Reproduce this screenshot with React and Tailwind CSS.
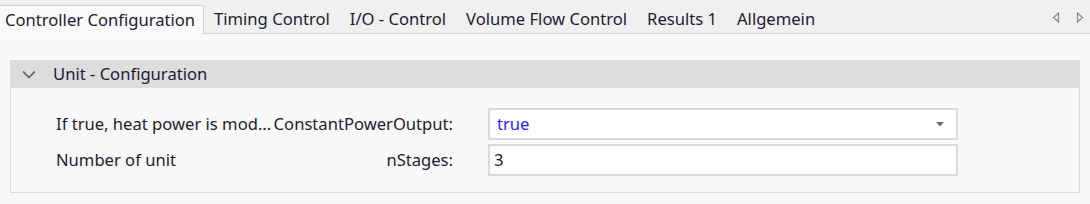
import React from "react";

const font = { fontFamily: '"Noto Sans", "Open Sans", sans-serif' };

function Tab({ label, active }) {
  if (active) {
    return (
      <div className="h-[29px] mt-[5px] pl-[5px] pr-[8px] flex items-center bg-[#fafafa] border border-b-0 border-l-0 border-[#d4d4d4] -mb-px relative z-10 text-[#1e1b33]">
        {label}
      </div>
    );
  }
  return (
    <div className="h-[29px] mt-[5px] px-[10px] flex items-center text-[#1e1b33]">{label}</div>
  );
}

export default function App() {
  return (
    <div className="w-[1090px] h-[204px] bg-[#f9f9f9] text-[16.6px] overflow-hidden" style={font}>
      <div className="h-[34px] bg-[#f0f0f0] border-b border-[#d4d4d4] flex items-start">
        <Tab label="Controller Configuration" active />
        <Tab label="Timing Control" />
        <Tab label="I/O - Control" />
        <Tab label="Volume Flow Control" />
        <Tab label="Results 1" />
        <Tab label="Allgemein" />
        <div className="ml-auto flex items-center gap-[16px] h-[34px] pr-[6px]">
          <svg width="8" height="11" viewBox="0 0 8 11">
            <path d="M6.5 1 L1.5 5.5 L6.5 10 Z" fill="none" stroke="#8a8a8a" strokeWidth="1.2" />
          </svg>
          <svg width="8" height="11" viewBox="0 0 8 11">
            <path d="M1.5 1 L6.5 5.5 L1.5 10 Z" fill="none" stroke="#8a8a8a" strokeWidth="1.2" />
          </svg>
        </div>
      </div>
      <div className="pt-[26px] pl-[10px] pr-[10px]">
        <div className="w-[1070px] border border-[#dcdcdc]">
          <div className="h-[27px] bg-[#dddddd] flex items-center text-[#1e1b33]">
            <svg width="14" height="9" viewBox="0 0 14 9" className="ml-[11px] mr-[17px]">
              <path d="M1 1.5 L7 7.5 L13 1.5" fill="none" stroke="#6e6e6e" strokeWidth="1.8" />
            </svg>
            Unit - Configuration
          </div>
          <div className="pt-[20px] pb-[16px] flex flex-col gap-[4px]">
            <div className="flex items-center">
              <div className="ml-[45px] w-[397px] flex justify-between text-[#1e1b33] whitespace-nowrap">
                <span>If true, heat power is mod...</span>
                <span>ConstantPowerOutput:</span>
              </div>
              <div className="ml-[35px] w-[470px] h-[32px] bg-white border-2 border-[#dadada] flex items-center pl-[7px] pr-[12px]">
                <span className="text-[#2a1ff5]">true</span>
                <svg width="8" height="5" viewBox="0 0 8 5" className="ml-auto">
                  <path d="M0 0 H8 L4 4.5 Z" fill="#6e6e6e" />
                </svg>
              </div>
            </div>
            <div className="flex items-center">
              <div className="ml-[45px] w-[397px] flex justify-between text-[#1e1b33] whitespace-nowrap">
                <span>Number of unit</span>
                <span>nStages:</span>
              </div>
              <div className="ml-[35px] w-[470px] h-[32px] bg-white border-2 border-[#dadada] flex items-center pl-[4px] text-[#1e1b33]">
                3
              </div>
            </div>
          </div>
        </div>
      </div>
    </div>
  );
}
